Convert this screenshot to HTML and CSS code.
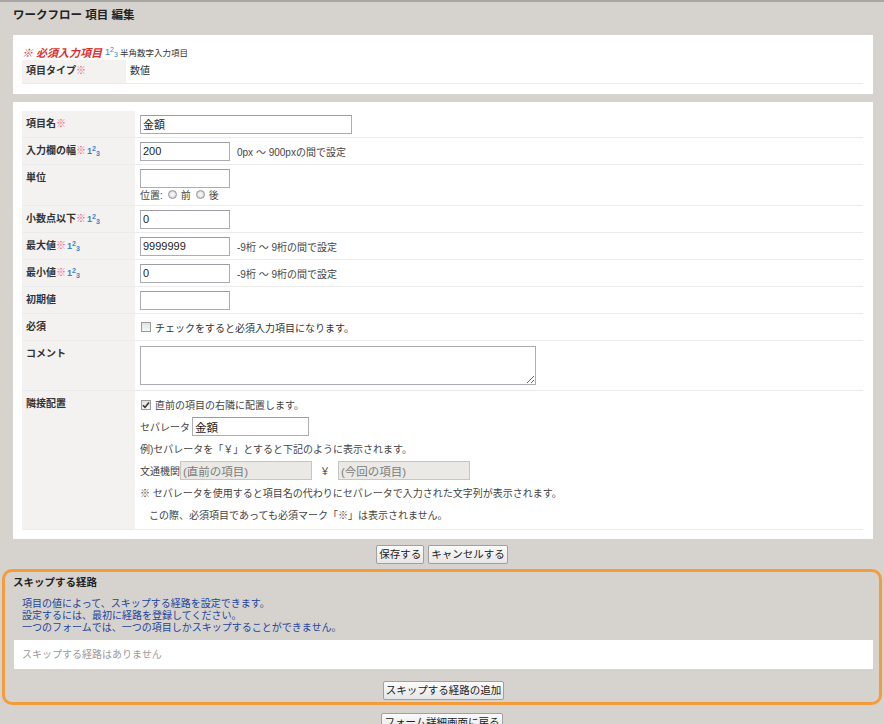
FILE: index.html
```html
<!DOCTYPE html>
<html lang="ja">
<head>
<meta charset="utf-8">
<title>ワークフロー 項目 編集</title>
<link rel="stylesheet" href="styles.css">
</head>
<body>
<div class="page">
  <h1 class="title">ワークフロー 項目 編集</h1>

  <div class="panel panel-type">
    <div class="legend">
      <span class="req-legend">※ 必須入力項目</span>
      <span class="num">1<sup>2</sup><sub>3</sub></span>
      <span class="legend-note">半角数字入力項目</span>
    </div>
    <table class="form form-type">
      <tr><th>項目タイプ<span class="req">※</span></th><td>数値</td></tr>
    </table>
  </div>

  <div class="panel panel-main">
    <table class="form form-main">
      <tr>
        <th>項目名<span class="req">※</span></th>
        <td><div class="line"><input class="in in-wide" value="金額"></div></td>
      </tr>
      <tr>
        <th>入力欄の幅<span class="req">※</span><span class="num num-s">1<sup>2</sup><sub>3</sub></span></th>
        <td><div class="line"><input class="in in-s" value="200"><span class="hint">0px ～ 900pxの間で設定</span></div></td>
      </tr>
      <tr>
        <th>単位</th>
        <td>
          <div class="line"><input class="in in-s" value=""></div>
          <div class="pos">位置: <span class="radio"></span>前<span class="radio"></span>後</div>
        </td>
      </tr>
      <tr>
        <th>小数点以下<span class="req">※</span><span class="num num-s">1<sup>2</sup><sub>3</sub></span></th>
        <td><div class="line"><input class="in in-s" value="0"></div></td>
      </tr>
      <tr>
        <th>最大値<span class="req">※</span><span class="num num-s">1<sup>2</sup><sub>3</sub></span></th>
        <td><div class="line"><input class="in in-s" value="9999999"><span class="hint">-9桁 ～ 9桁の間で設定</span></div></td>
      </tr>
      <tr>
        <th>最小値<span class="req">※</span><span class="num num-s">1<sup>2</sup><sub>3</sub></span></th>
        <td><div class="line"><input class="in in-s" value="0"><span class="hint">-9桁 ～ 9桁の間で設定</span></div></td>
      </tr>
      <tr>
        <th>初期値</th>
        <td><div class="line"><input class="in in-s" value=""></div></td>
      </tr>
      <tr>
        <th>必須</th>
        <td><div class="line"><span class="cb"></span><span>チェックをすると必須入力項目になります。</span></div></td>
      </tr>
      <tr>
        <th>コメント</th>
        <td class="td-area"><textarea class="area"></textarea></td>
      </tr>
      <tr>
        <th>隣接配置</th>
        <td class="td-stack">
          <div class="sline"><span class="cb cb-on"><svg viewBox="0 0 10 10" width="10" height="10"><path d="M2 5.2 L4 7.4 L8 2.6" fill="none" stroke="#333" stroke-width="1.6"/></svg></span><span>直前の項目の右隣に配置します。</span></div>
          <div class="sline"><span>セパレータ</span><input class="in in-sep" value="金額"></div>
          <div class="sline">例)セパレータを「￥」とすると下記のように表示されます。</div>
          <div class="sline"><span>文通機関</span><input class="in in-dis" value="(直前の項目)" disabled><span class="yen">￥</span><input class="in in-dis" value="(今回の項目)" disabled></div>
          <div class="sline">※ セパレータを使用すると項目名の代わりにセパレータで入力された文字列が表示されます。</div>
          <div class="sline indent">この際、必須項目であっても必須マーク「※」は表示されません。</div>
        </td>
      </tr>
    </table>
  </div>

  <div class="actions">
    <button class="btn" type="button">保存する</button>
    <button class="btn" type="button">キャンセルする</button>
  </div>

  <section class="skip">
    <div class="skip-title">スキップする経路</div>
    <div class="skip-info">
      項目の値によって、スキップする経路を設定できます。<br>
      設定するには、最初に経路を登録してください。<br>
      一つのフォームでは、一つの項目しかスキップすることができません。
    </div>
    <div class="skip-list">スキップする経路はありません</div>
    <div class="skip-actions"><button class="btn" type="button">スキップする経路の追加</button></div>
  </section>

  <div class="actions back">
    <button class="btn" type="button">フォーム詳細画面に戻る</button>
  </div>
</div>
</body>
</html>
```

FILE: styles.css
```css
* { box-sizing: border-box; }
html, body { margin: 0; padding: 0; }
body {
  background: #d6d3ce;
  font-family: "Liberation Sans", "Noto Sans CJK JP", sans-serif;
  font-size: 10px;
  color: #333;
}
.page { width: 884px; height: 724px; overflow: hidden; }

.title {
  margin: 0;
  height: 35px;
  border-top: 2px solid #a9a7a3;
  padding: 0 13px;
  font-size: 11.5px;
  line-height: 26px;
  font-weight: bold;
  color: #222;
}

.panel { background: #fff; margin: 0 11px 0 13px; }
.panel-type { padding: 9px 10px 10px 9px; }
.panel-main { margin-top: 8px; padding: 9px 10px 9px 9px; }

.legend { height: 16px; display: flex; align-items: center; white-space: nowrap; }
.req-legend { color: #d9302f; font-style: italic; font-weight: bold; font-size: 11px; }
.legend-note { font-size: 8.5px; color: #333; margin-left: 2px; }

.num { display: inline-block; color: #3a84c8; font-size: 9px; line-height: 1; margin-left: 3px; }
.num sup { font-size: 7px; vertical-align: 3px; }
.num sub { font-size: 7px; vertical-align: -2px; }
.num-s { margin-left: 1px; }

.req { color: #ef5a7c; font-weight: normal; }

.form { width: 100%; border-collapse: collapse; }
.form th {
  background: #f3f2f0;
  text-align: left;
  vertical-align: top;
  font-weight: bold;
  color: #333;
  white-space: nowrap;
  border-bottom: 1px solid #ebebeb;
}
.form td {
  vertical-align: top;
  border-bottom: 1px solid #ebebeb;
}

.form-type th { width: 104px; height: 23px; padding: 0 4px; line-height: 22px; }
.form-type td { padding: 0 4px; line-height: 22px; }

.form-main th { width: 113px; padding: 6px 4px 0; line-height: 14px; }
.form-main td { padding: 4px 5px 3px; }

.line { display: flex; align-items: center; height: 19px; gap: 7px; white-space: nowrap; }
.hint { color: #444; }

.in {
  height: 19px;
  border: 1px solid #abadb3;
  border-top-color: #9a9ca3;
  background: #fff;
  font-family: "Liberation Sans", "Noto Sans CJK JP", sans-serif;
  font-size: 11px;
  color: #222;
  padding: 0 2px;
  margin: 0;
  outline: none;
}
.in-wide { width: 212px; }
.in-s { width: 90px; }
.in-sep { width: 117px; margin-left: 2px; font-size: 11.5px; }
.in-dis {
  width: 132px;
  background: #ebe9e5;
  border-color: #c7c5c0;
  color: #7b7b7b;
  font-size: 11.5px;
}

.pos { display: flex; align-items: center; height: 14px; white-space: nowrap; color: #444; }
.radio {
  display: inline-block;
  width: 9px;
  height: 9px;
  border-radius: 50%;
  border: 1px solid #9a9a9a;
  background: radial-gradient(circle at 50% 50%, #f4f4f4 0, #f4f4f4 35%, #cfcfcf 70%);
  margin: 0 4px 0 5px;
}

.cb {
  display: inline-block;
  width: 10px;
  height: 10px;
  border: 1px solid #9a9a9a;
  background: linear-gradient(#e2e2e2, #f6f6f6);
  margin: 0 4px 0 1px;
  position: relative;
  flex: none;
}
.cb-on svg { position: absolute; left: -1px; top: -1px; }
.line .cb { margin-right: -3px; }

.td-area { padding-top: 5px !important; padding-bottom: 5px !important; }
.area {
  display: block;
  width: 396px;
  height: 39px;
  border: 1px solid #abadb3;
  margin: 0;
  resize: both;
  font-family: inherit;
}

.form-main td.td-stack { padding: 3px 5px; }
.sline { display: flex; align-items: center; height: 22px; white-space: nowrap; color: #444; }
.sline .cb { margin-right: 4px; }
.yen { display: inline-block; width: 26px; text-align: center; }
.indent { padding-left: 9px; }

.actions { text-align: center; margin-top: 6px; font-size: 0; }
.btn {
  font-family: "Liberation Sans", "Noto Sans CJK JP", sans-serif;
  font-size: 10.5px;
  height: 19px;
  line-height: 17px;
  padding: 0 2px;
  margin: 0 2px;
  border: 1px solid #a0a0a0;
  border-radius: 2px;
  background: linear-gradient(#fbfbfb, #e6e6e6);
  color: #222;
  vertical-align: top;
}

.skip {
  margin: 5px 2px 0;
  height: 136px;
  border: 3px solid #f49c3c;
  border-radius: 10px;
  padding: 3px 6px 2px 9px;
}
.skip-title { font-weight: bold; font-size: 10.5px; line-height: 14px; color: #222; margin-left: -1px; }
.skip-info { margin: 9px 0 0 8px; color: #23449c; font-size: 10px; line-height: 12px; }
.skip-list {
  margin-top: 6px;
  background: #fff;
  height: 29px;
  padding-left: 8px;
  line-height: 29px;
  color: #9a9a9a;
  font-size: 10px;
}
.skip-actions { margin-top: 12px; text-align: center; font-size: 0; }

.back { margin-top: 8px; }
```
